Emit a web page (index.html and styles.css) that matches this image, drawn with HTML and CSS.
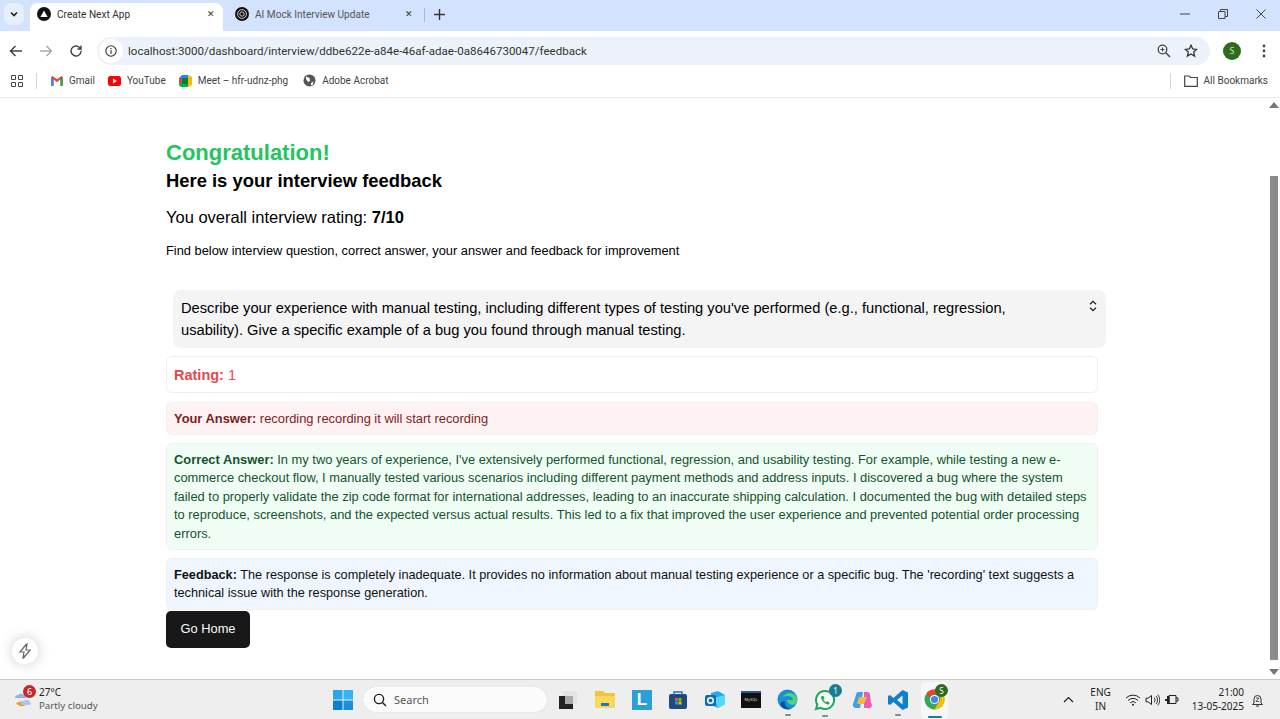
FILE: index.html
```html
<!DOCTYPE html>
<html lang="en">
<head>
    <meta charset="UTF-8">
    <meta name="viewport" content="width=device-width, initial-scale=1.0">
    <title>Create Next App</title>
    <link rel="stylesheet" href="styles.css">
</head>
<body>

    <!-- Tab strip -->
    <div class="tabstrip">
        <div class="tab-search">
            <svg width="10" height="10" viewBox="0 0 10 10"><path d="M2 3.5 5 6.5 8 3.5" fill="none" stroke="#1f1f1f" stroke-width="1.6"/></svg>
        </div>
        <div class="tab active">
            <svg class="favicon" width="14" height="14" viewBox="0 0 14 14"><circle cx="7" cy="7" r="7" fill="#111"/><path d="M7 3.4 10.6 10H3.4Z" fill="#fff"/></svg>
            <span class="tab-title">Create Next App</span>
            <span class="tab-close">✕</span>
        </div>
        <div class="tab">
            <svg class="favicon" width="14" height="14" viewBox="0 0 14 14"><circle cx="7" cy="7" r="7" fill="#111"/><circle cx="7" cy="7" r="4.4" fill="none" stroke="#ccc" stroke-width="1"/><circle cx="7" cy="7" r="2.2" fill="none" stroke="#ccc" stroke-width="1"/></svg>
            <span class="tab-title">AI Mock Interview Update</span>
            <span class="tab-close">✕</span>
        </div>
        <div class="tab-sep"></div>
        <svg class="new-tab" width="11" height="11" viewBox="0 0 11 11"><path d="M5.5 0v11M0 5.5h11" stroke="#333" stroke-width="1.4"/></svg>
        <div class="window-btns">
            <svg width="10" height="10" viewBox="0 0 10 10"><path d="M0 5h10" stroke="#444" stroke-width="1"/></svg>
            <svg width="10" height="10" viewBox="0 0 10 10"><path d="M.5 2.5h6.5v7H.5zM2.5 2.5V.5h7v7H7" fill="none" stroke="#444" stroke-width="1"/></svg>
            <svg width="10" height="10" viewBox="0 0 10 10"><path d="M.5.5l9 9M9.500.5l-9 9" stroke="#444" stroke-width="1"/></svg>
        </div>
    </div>

    <!-- Address bar -->
    <div class="toolbar">
        <svg width="14" height="14" viewBox="0 0 14 14"><path d="M13 7H2M6.500 2 1.500 7l5 5" fill="none" stroke="#444" stroke-width="1.5"/></svg>
        <svg width="14" height="14" viewBox="0 0 14 14"><path d="M1 7h11M7.500 2l5 5-5 5" fill="none" stroke="#a8abb0" stroke-width="1.5"/></svg>
        <svg width="14" height="14" viewBox="0 0 14 14"><path d="M12 7a5 5 0 1 1-1.500-3.600L12 5V1.500M12 5H8.500" fill="none" stroke="#444" stroke-width="1.4"/></svg>
        <div class="omnibox">
            <div class="site-info">
                <svg width="12" height="12" viewBox="0 0 12 12"><circle cx="6" cy="6" r="5.200" fill="none" stroke="#333" stroke-width="1.100"/><path d="M6 5.200v3.600M6 3v1.200" stroke="#333" stroke-width="1.200"/></svg>
            </div>
            <span class="url">localhost:3000/dashboard/interview/ddbe622e-a84e-46af-adae-0a8646730047/feedback</span>
            <svg class="zoom-icon" width="14" height="14" viewBox="0 0 14 14"><circle cx="5.500" cy="5.500" r="4.300" fill="none" stroke="#444" stroke-width="1.300"/><path d="M8.800 8.800 13 13" stroke="#444" stroke-width="1.500"/><path d="M3.500 5.500h4M5.500 3.500v4" stroke="#444"/></svg>
            <svg class="star-icon" width="14" height="14" viewBox="0 0 14 14"><path d="M7 1.300 8.700 5l4 .4-3 2.700.9 4L7 10l-3.600 2.100.9-4-3-2.700 4-.4Z" fill="none" stroke="#333" stroke-width="1.300"/></svg>
        </div>
        <div class="avatar">S</div>
        <svg class="menu-icon" width="4" height="14" viewBox="0 0 4 14"><circle cx="2" cy="2" r="1.400" fill="#444"/><circle cx="2" cy="7" r="1.400" fill="#444"/><circle cx="2" cy="12" r="1.400" fill="#444"/></svg>
    </div>

    <!-- Bookmarks -->
    <div class="bookmarks">
        <svg width="12" height="12" viewBox="0 0 12 12"><path d="M.5.5h4v4h-4zM7.500.5h4v4h-4zM.5 7.500h4v4h-4zM7.500 7.500h4v4h-4z" fill="none" stroke="#444"/></svg>
        <div class="bm-sep"></div>
        <div class="bookmark">
            <svg width="12" height="10" viewBox="0 0 12 10"><path d="M0 1.500V10h2.500V3.500L6 6l3.500-2.500V10H12V1.500L10.500 0 6 3.300 1.500 0Z" fill="#ea4335"/><path d="M0 1.500V10h2.500V3.500Z" fill="#4285f4"/><path d="M12 1.500V10H9.500V3.500Z" fill="#34a853"/></svg>
            Gmail
        </div>
        <div class="bookmark">
            <svg width="13" height="10" viewBox="0 0 13 10"><rect width="13" height="10" rx="2.500" fill="#f00"/><path d="M5 2.500 9 5 5 7.500Z" fill="#fff"/></svg>
            YouTube
        </div>
        <div class="bookmark">
            <svg width="13" height="12" viewBox="0 0 13 12"><path d="M0 3 3 0h6v3H3v6H0Z" fill="#2684fc"/><path d="M3 9h6v3H2L0 10V9Z" fill="#00ac47"/><path d="M9 0v12l4-2V2Z" fill="#ffba00"/><path d="M3 3h6v6H3Z" fill="#00832d"/><path d="M0 3h3v6H0Z" fill="#ea4335" opacity=".8"/></svg>
            Meet – hfr-udnz-phg
        </div>
        <div class="bookmark bm-adobe">
            <svg width="13" height="13" viewBox="0 0 13 13"><circle cx="6.500" cy="6.500" r="6" fill="#555"/><path d="M3 2.500 6.500 4 7 7l-2 1-2-3ZM8 9l2.500-1.500L10 10.500 8 11.500Z" fill="#fff"/></svg>
            Adobe Acrobat
        </div>
        <div class="bm-right">
            <div class="bm-sep"></div>
            <div class="bookmark">
                <svg width="14" height="12" viewBox="0 0 14 12"><path d="M.7 1h4.500l1.300 1.500h6.800v8.800H.7Z" fill="none" stroke="#444" stroke-width="1.200"/></svg>
                All Bookmarks
            </div>
        </div>
    </div>

    <!-- Page viewport -->
    <div class="viewport">
        <main class="page">
            <h2 class="congrats">Congratulation!</h2>
            <h2 class="subtitle">Here is your interview feedback</h2>
            <h2 class="overall">You overall interview rating: <strong>7/10</strong></h2>
            <h2 class="hint">Find below interview question, correct answer, your answer and feedback for improvement</h2>

            <div class="question">
                <span>Describe your experience with manual testing, including different types of testing you've performed (e.g., functional, regression, usability). Give a specific example of a bug you found through manual testing.</span>
                <svg width="10" height="12" viewBox="0 0 10 12"><path d="M2 4.300 5 1.300l3 3M2 7.700l3 3 3-3" fill="none" stroke="#222" stroke-width="1.300"/></svg>
            </div>

            <div class="answers">
                <div class="card rating"><strong>Rating:</strong> 1</div>
                <div class="card yours"><strong>Your Answer:</strong> recording recording it will start recording</div>
                <div class="card correct"><strong>Correct Answer:</strong> In my two years of experience, I've extensively performed functional, regression, and usability testing. For example, while testing a new e-commerce checkout flow, I manually tested various scenarios including different payment methods and address inputs. I discovered a bug where the system failed to properly validate the zip code format for international addresses, leading to an inaccurate shipping calculation. I documented the bug with detailed steps to reproduce, screenshots, and the expected versus actual results. This led to a fix that improved the user experience and prevented potential order processing errors.</div>
                <div class="card feedback"><strong>Feedback:</strong> The response is completely inadequate. It provides no information about manual testing experience or a specific bug. The 'recording' text suggests a technical issue with the response generation.</div>
            </div>
            <button class="home-btn">Go Home</button>
        </main>

        <div class="scrollbar">
            <div class="arrow-up"></div>
            <div class="track"><div class="thumb"></div></div>
            <div class="arrow-down"></div>
        </div>

        <!-- Next dev indicator -->
        <div class="dev-badge">
            <svg width="14" height="16" viewBox="0 0 14 16"><path d="M8.500 1 2 9h4l-1 6 2-2.500M5.500 15 12 7H8l1-6-2 2.500" fill="none" stroke="#666" stroke-width="1.200"/></svg>
        </div>
    </div>

    <!-- Windows taskbar -->
    <footer class="taskbar">
        <div class="weather">
            <div class="weather-icon">
                <svg width="24" height="24" viewBox="0 0 24 24"><path d="M2 10a3 3 0 0 1 3-3 4 4 0 0 1 6 0h2v3Z" fill="#8fb4ea"/><path d="M3 15c3 4 8 4 11 1l-4-3Z" fill="#f0962e"/><path d="M8 16a3 3 0 0 1 3-3 3.500 3.500 0 0 1 6 1 2 2 0 0 1 0 3H9Z" fill="#a9c6f0"/></svg>
                <span class="weather-badge">6</span>
            </div>
            <div class="weather-text">
                <div class="temp">27°C</div>
                <div class="cond">Partly cloudy</div>
            </div>
        </div>

        <div class="task-icons">
            <svg class="app" width="20" height="20" viewBox="0 0 20 20"><path d="M0 0h9.500v9.500H0z" fill="#2aa7e8"/><path d="M10.500 0H20v9.500h-9.500z" fill="#34b4f0"/><path d="M0 10.500h9.500V20H0z" fill="#0a7fd0"/><path d="M10.500 10.500H20V20h-9.500z" fill="#1a90dc"/></svg>
            <div class="search-pill">
                <svg width="14" height="14" viewBox="0 0 14 14"><circle cx="6" cy="6" r="4.600" fill="none" stroke="#222" stroke-width="1.400"/><path d="M9.500 9.500 13 13" stroke="#222" stroke-width="1.500"/></svg>
                Search
            </div>
            <svg class="app" width="20" height="20" viewBox="0 0 20 20"><rect x="5" y="1" width="14" height="13" fill="#e4e4e4"/><rect x="1" y="6" width="14" height="13" fill="#222"/><rect x="7" y="6" width="8" height="8" fill="#aaa"/></svg>
            <svg class="app" width="22" height="20" viewBox="0 0 22 20"><path d="M1 1h8l2 2h10v15H1Z" fill="#f5c33b"/><path d="M1 6h20v12H1Z" fill="#fbd75b"/><rect x="7" y="13" width="8" height="3" fill="#1b78c9"/></svg>
            <div class="app-l">L</div>
            <svg class="app" width="20" height="20" viewBox="0 0 20 20"><rect x="1" y="4" width="18" height="15" rx="2" fill="#1d4a80"/><path d="M6 5V2h8v3" fill="none" stroke="#1d75b8" stroke-width="1.500"/><rect x="7" y="8" width="3" height="3" fill="#f25022"/><rect x="10.500" y="8" width="3" height="3" fill="#7fba00"/><rect x="7" y="11.500" width="3" height="3" fill="#00a4ef"/><rect x="10.500" y="11.500" width="3" height="3" fill="#ffb900"/></svg>
            <svg class="app" width="21" height="20" viewBox="0 0 21 20"><path d="M7 3l7-2 7 4v9l-7 4-7-3Z" fill="#28a8ea"/><path d="M10 8l11-3v9l-7 4Z" fill="#50d9ff"/><rect x="1" y="5" width="11" height="11" rx="2" fill="#0f6cbd"/><circle cx="6.500" cy="10.500" r="2.800" fill="none" stroke="#fff" stroke-width="1.500"/></svg>
            <div class="app-mysql"><span>MySQL</span></div>
            <div class="app-run">
                <svg class="app" width="21" height="21" viewBox="0 0 21 21"><circle cx="10.500" cy="10.500" r="10" fill="#1b8fd6"/><path d="M20 9C18 3 9 2 6 8c4-2 10-1 10 3h-6c0 4 5 6 9 4 1-2 1-4 1-6Z" fill="#4fd37a"/><path d="M3 15c2 5 8 6 11 5-5-1-7-5-6-8-2 0-4 1-5 3Z" fill="#0b4f9e"/></svg>
            </div>
            <div class="app-run">
                <svg class="app" width="22" height="22" viewBox="0 0 22 22"><path d="M11 2a9 9 0 0 0-7.700 13.600L2 20l4.600-1.200A9 9 0 1 0 11 2Z" fill="#f5fff7" stroke="#1fa855" stroke-width="2"/><path d="M7.500 7c-1 2 0 4 2 6s4 3 6 2l-.5-2-2-.8-1 1c-1-.4-2.300-1.700-2.700-2.700l1-1L9.500 7Z" fill="#1fa855"/></svg>
                <span class="wa-badge">1</span>
            </div>
            <svg class="app" width="20" height="20" viewBox="0 0 20 20"><path d="M7 2h4l-3 16H4a3 3 0 0 1-3-4L4 5a3 3 0 0 1 3-3Z" fill="#3f9ef0"/><path d="M12 2h3a3 3 0 0 1 3 3l1 8a3 3 0 0 1-3 5h-4Z" fill="#e65fb2"/><path d="M7 7h8l-3 7H5Z" fill="#f5b93e"/></svg>
            <div class="app-run">
                <svg class="app" width="20" height="20" viewBox="0 0 20 20"><path d="M14.500 0 20 2.500v15L14.500 20 5.500 12 2 15 0 14V6l2-1 3.500 3ZM14.500 5.500 9 10l5.500 4.500Z" fill="#0f7fcc"/></svg>
            </div>
            <div class="app-run app-active">
                <svg width="21" height="21" viewBox="0 0 21 21"><circle cx="10.500" cy="10.500" r="10" fill="#34a853"/><path d="M10.500.5a10 10 0 0 1 8.700 5H10.500a5 5 0 0 0-4.500 3L2.500 4a10 10 0 0 1 8-3.500Z" fill="#ea4335"/><path d="M19.200 5.500a10 10 0 0 1-8.700 15l4.300-7.500a5 5 0 0 0 0-7.500Z" fill="#fbbc04"/><circle cx="10.500" cy="10.500" r="4.600" fill="#fff"/><circle cx="10.500" cy="10.500" r="3.600" fill="#4285f4"/></svg>
                <span class="chrome-badge">S</span>
            </div>
        </div>

        <div class="tray">
            <svg width="11" height="7" viewBox="0 0 11 7"><path d="M1 6l4.500-4.500L10 6" fill="none" stroke="#222" stroke-width="1.200"/></svg>
            <div class="lang">ENG<br>IN</div>
            <div class="tray-icons">
                <svg width="16" height="12" viewBox="0 0 16 12"><path d="M1 4a10 10 0 0 1 14 0M3 6.500a7 7 0 0 1 10 0M5.200 8.800a4 4 0 0 1 5.600 0" fill="none" stroke="#222" stroke-width="1"/><circle cx="8" cy="10.800" r="1" fill="#222"/></svg>
                <svg width="15" height="12" viewBox="0 0 15 12"><path d="M1 4.200h2L6.500 1.500v9L3 7.800H1Z" fill="none" stroke="#222"/><path d="M9 3.500a3.500 3.500 0 0 1 0 5M11 2a6 6 0 0 1 0 8M12.800 .7a8 8 0 0 1 0 10.600" fill="none" stroke="#222" stroke-width=".9"/></svg>
                <svg width="15" height="13" viewBox="0 0 15 13"><path d="M5 2.500h7v8H5Z" fill="none" stroke="#222"/><path d="M12 5h2v3h-2" fill="none" stroke="#222"/><path d="M3 3v3H1v2h2v3h2.500V3Z" fill="#222"/></svg>
            </div>
            <div class="clock">
                <div>21:00</div>
                <div>13-05-2025</div>
            </div>
            <svg width="13" height="14" viewBox="0 0 13 14"><path d="M3 10V6a3.500 3.500 0 0 1 7 0v4l1.500 1.500h-10ZM5 13h3" fill="none" stroke="#333"/><path d="M5 5h3L5 8.500h3" fill="none" stroke="#333" stroke-width=".8"/></svg>
        </div>
    </footer>

</body>
</html>
```

FILE: styles.css
```css
* {
    box-sizing: border-box;
    margin: 0;
    padding: 0;
}

html, body {
    height: 100%;
    overflow: hidden;
}

body {
    display: flex;
    flex-direction: column;
    font-family: "Liberation Sans", Arial, sans-serif;
    background: #fff;
}

/* Browser chrome */
.tabstrip {
    height: 31px;
    flex: none;
    display: flex;
    align-items: flex-end;
    background: #d3e3fd;
    font-family: Roboto, sans-serif;
    font-size: 10.1px;
    color: #444;
}

.tab-search {
    width: 20px;
    height: 22px;
    margin: 0 6px 6px 4px;
    display: flex;
    align-items: center;
    justify-content: center;
    border-radius: 7px;
    background: #e6effd;
}

.tab {
    height: 28px;
    padding: 0 8px 6px 7px;
    display: flex;
    align-items: center;
    gap: 6px;
    border-radius: 8px 8px 0 0;
}

.tab.active {
    width: 193px;
    background: #fff;
    color: #333;
}

.tab:not(.active) {
    width: 201px;
    padding-left: 12px;
    padding-right: 11px;
    color: #555;
}

.tab-title {
    flex: 1;
    white-space: nowrap;
}

.tab-close {
    font-size: 9px;
    color: #333;
}

.tab-sep {
    width: 1px;
    height: 14px;
    margin: 0 0 9px 0;
    background: #a9b8d0;
}

.new-tab {
    margin: 0 0 11px 9px;
}

.window-btns {
    margin-left: auto;
    height: 100%;
    display: flex;
    align-items: center;
    gap: 28px;
    padding: 0 14px 3px 0;
}

.toolbar {
    height: 35px;
    flex: none;
    display: flex;
    align-items: center;
    gap: 16px;
    padding: 4px 14px 0 9px;
    background: #fff;
}

.omnibox {
    height: 28px;
    flex: 1;
    margin-left: -2px;
    display: flex;
    align-items: center;
    border-radius: 14px;
    background: #edf2fa;
    padding: 0 12px 0 2px;
    font-family: Roboto, sans-serif;
}

.site-info {
    width: 24px;
    height: 24px;
    margin-right: 5px;
    display: flex;
    align-items: center;
    justify-content: center;
    border-radius: 50%;
    background: #fff;
}

.url {
    flex: 1;
    font-size: 11.55px;
    color: #333;
    white-space: nowrap;
}

.star-icon {
    margin-left: 13px;
}

.avatar {
    width: 18px;
    height: 18px;
    margin-left: -3px;
    flex: none;
    border-radius: 50%;
    background: #2e6b1f;
    color: #cfe6c8;
    font: 9px/18px "Noto Sans", sans-serif;
    text-align: center;
}

.menu-icon {
    margin-left: 5px;
    flex: none;
}

.bookmarks {
    height: 32px;
    flex: none;
    display: flex;
    align-items: center;
    gap: 13px;
    padding: 0 12px 2px 11px;
    background: #fff;
    border-bottom: 1px solid #e8e8e8;
    font-family: Roboto, sans-serif;
    font-size: 10px;
    color: #444;
}

.bm-sep {
    width: 1px;
    height: 16px;
    background: #cdd6e6;
}

.bookmarks > .bm-sep {
    margin-right: 1px;
}

.bookmark {
    display: flex;
    align-items: center;
    gap: 6px;
    white-space: nowrap;
}

.bm-adobe {
    margin-left: 2px;
}

.bm-right {
    margin-left: auto;
    display: flex;
    align-items: center;
    gap: 13px;
}

/* Page */
.viewport {
    flex: 1;
    min-height: 0;
    position: relative;
    display: flex;
}

.page {
    flex: 1;
    padding: 41px 170px 0 166px;
    color: #000;
}

.congrats {
    font-size: 22px;
    line-height: 28px;
    color: #22c55e;
}

.subtitle {
    font-size: 18.4px;
    line-height: 28px;
}

.overall {
    margin-top: 10px;
    font-size: 16.5px;
    font-weight: 400;
    line-height: 24px;
}

.hint {
    margin-top: 12px;
    font-size: 12.85px;
    font-weight: 400;
    line-height: 20px;
}

.question {
    margin: 29px -8px 8px 7px;
    padding: 7px 8px;
    display: flex;
    justify-content: space-between;
    gap: 40px;
    border-radius: 8px;
    background: #f4f4f5;
    font-size: 14.7px;
    line-height: 22px;
}

.question svg {
    flex: none;
    margin: 3px 0 0;
}

.answers {
    display: flex;
    flex-direction: column;
    gap: 8px;
}

.card {
    padding: 6.5px 7px;
    border: 1px solid #f0f0f1;
    border-radius: 6px;
    font-size: 12.88px;
    line-height: 18.4px;
}

.rating {
    margin-bottom: 1px;
    padding: 7.5px 7px;
    font-size: 14.5px;
    line-height: 20px;
    color: #e5484d;
}

.yours {
    background: #fef2f2;
    color: #7f1d1d;
}

.correct {
    background: #f0fdf4;
    color: #14532d;
}

.feedback {
    background: #eff6ff;
    color: #111;
    font-size: 12.72px;
}

.home-btn {
    display: block;
    width: 84px;
    height: 37px;
    margin-top: 1px;
    padding-bottom: 2px;
    border: none;
    border-radius: 5px;
    background: #18181b;
    color: #fafafa;
    font: 12.85px "Liberation Sans", Arial, sans-serif;
}

.scrollbar {
    width: 12px;
    flex: none;
    display: flex;
    flex-direction: column;
    align-items: center;
}

.arrow-up, .arrow-down {
    width: 0;
    height: 0;
    margin: 4px 0;
    border-left: 5px solid transparent;
    border-right: 5px solid transparent;
}

.arrow-up {
    border-bottom: 6px solid #777;
}

.arrow-down {
    border-top: 6px solid #777;
}

.track {
    flex: 1;
    width: 100%;
    padding: 64px 2px 5px;
}

.thumb {
    height: 100%;
    background: #8b8b8b;
}

.dev-badge {
    position: absolute;
    left: 12px;
    bottom: 15px;
    width: 26px;
    height: 26px;
    display: flex;
    align-items: center;
    justify-content: center;
    border-radius: 50%;
    background: #fff;
    box-shadow: 0 0 14px rgba(0, 0, 0, .2);
}

/* Taskbar */
.taskbar {
    height: 40px;
    flex: none;
    position: relative;
    display: flex;
    align-items: center;
    justify-content: space-between;
    background: #eeeeee;
    border-top: 1px solid #c9c9c9;
    font-family: "Noto Sans", sans-serif;
    color: #222;
}

.weather {
    display: flex;
    align-items: center;
    gap: 2px;
    padding-left: 13px;
}

.weather-icon {
    position: relative;
    width: 24px;
    height: 24px;
}

.weather-badge {
    position: absolute;
    left: 10px;
    top: -3px;
    width: 13px;
    height: 13px;
    border-radius: 50%;
    background: #c62828;
    color: #fff;
    font-size: 9px;
    line-height: 13px;
    text-align: center;
}

.temp {
    font-size: 10px;
    line-height: 13px;
}

.cond {
    font-size: 9.7px;
    line-height: 14px;
    color: #555;
}

.task-icons {
    position: absolute;
    left: 333px;
    top: 0;
    height: 100%;
    display: flex;
    align-items: center;
    gap: 16px;
}

.search-pill {
    width: 184px;
    height: 25px;
    margin: 0 -5px 0 -6px;
    padding-left: 10px;
    display: flex;
    align-items: center;
    gap: 7px;
    border-radius: 13px;
    background: #fbfbfb;
    box-shadow: 0 0 1px rgba(0, 0, 0, .2);
    font-size: 11px;
    color: #555;
}

.app {
    flex: none;
}

.app-l {
    width: 20px;
    height: 20px;
    background: #2b9fd6;
    color: #fff;
    font: bold 17px/20px "Liberation Sans", sans-serif;
    text-align: center;
}

.app-mysql {
    width: 20px;
    height: 17px;
    border-top: 2px solid #2a5b96;
    background: #111;
    color: #ddd;
    font-size: 4px;
    line-height: 13px;
    text-align: center;
}

.app-run {
    position: relative;
    display: flex;
}

/* running indicator under taskbar apps */
.app-run::after {
    content: "";
    position: absolute;
    left: 50%;
    bottom: -6px;
    width: 6px;
    height: 2px;
    margin-left: -3px;
    border-radius: 1px;
    background: #888;
}

.app-active::before {
    content: "";
    position: absolute;
    left: -3px;
    right: -3px;
    top: -7px;
    bottom: -9px;
    border-radius: 4px;
    background: #f7f7f7;
}

.app-active svg {
    position: relative;
}

.app-active::after {
    width: 14px;
    margin-left: -7px;
    bottom: -8px;
    background: #1b7a94;
}

.wa-badge, .chrome-badge {
    position: absolute;
    top: -5px;
    right: -6px;
    width: 13px;
    height: 13px;
    border-radius: 50%;
    color: #fff;
    font-size: 8px;
    line-height: 13px;
    text-align: center;
}

.wa-badge {
    background: #1b7a94;
}

.chrome-badge {
    right: -3px;
    background: #2e6b1f;
}

.tray {
    display: flex;
    align-items: center;
    padding-right: 16px;
    font-size: 10px;
}

.lang {
    margin-left: 16px;
    line-height: 13.5px;
    text-align: center;
}

.tray-icons {
    margin: 0 13px 0 14px;
    display: flex;
    align-items: center;
    gap: 4px;
}

.clock {
    margin-right: 7px;
    line-height: 13.5px;
    text-align: right;
}
```
